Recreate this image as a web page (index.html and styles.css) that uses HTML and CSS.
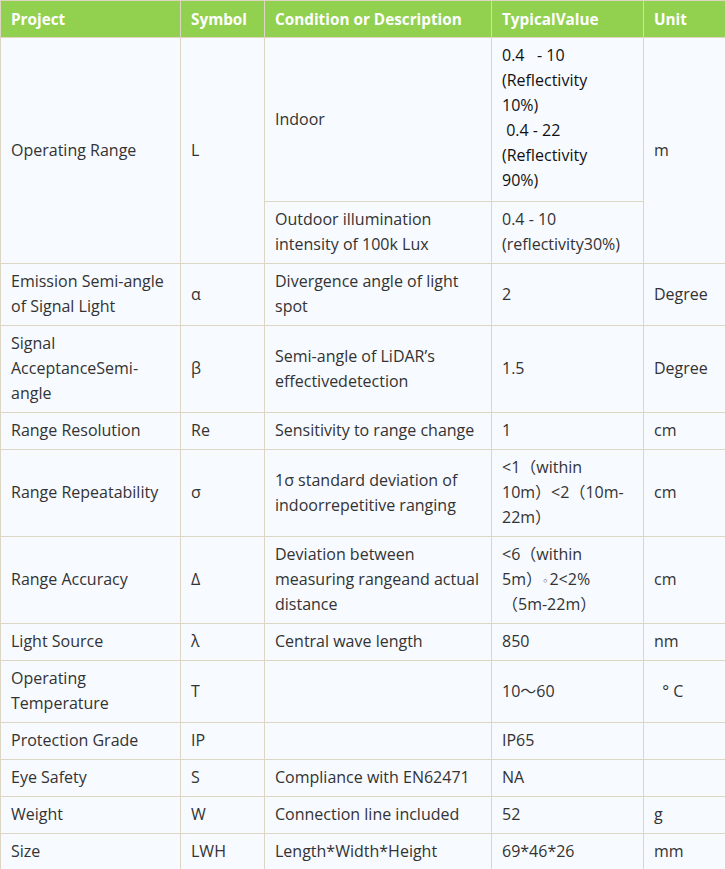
FILE: index.html
```html
<!DOCTYPE html>
<html>
<head>
<meta charset="utf-8">
<link rel="stylesheet" href="styles.css">
</head>
<body>
<table class="spec">
<colgroup>
<col class="c1"><col class="c2"><col class="c3"><col class="c4"><col class="c5">
</colgroup>
<thead>
<tr><th>Project</th><th>Symbol</th><th>Condition or Description</th><th>TypicalValue</th><th>Unit</th></tr>
</thead>
<tbody>
<tr>
<td rowspan="2">Operating Range</td>
<td rowspan="2">L</td>
<td>Indoor</td>
<td class="dark tall">0.4&nbsp;&nbsp; - 10<br>(Reflectivity<br>10%)<br>&nbsp;0.4 - 22<br>(Reflectivity<br>90%)</td>
<td rowspan="2">m</td>
</tr>
<tr>
<td>Outdoor illumination<br>intensity of 100k Lux</td>
<td>0.4 - 10<br>(reflectivity30%)</td>
</tr>
<tr><td>Emission Semi-angle<br>of Signal Light</td><td>α</td><td>Divergence angle of light<br>spot</td><td>2</td><td>Degree</td></tr>
<tr><td>Signal<br>AcceptanceSemi-<br>angle</td><td>β</td><td>Semi-angle of LiDAR’s<br>effectivedetection</td><td>1.5</td><td>Degree</td></tr>
<tr><td>Range Resolution</td><td>Re</td><td>Sensitivity to range change</td><td>1</td><td>cm</td></tr>
<tr><td>Range Repeatability</td><td>σ</td><td>1σ standard deviation of<br>indoorrepetitive ranging</td><td>&lt;1（within<br>10m）&lt;2（10m-<br>22m）</td><td>cm</td></tr>
<tr><td>Range Accuracy</td><td>Δ</td><td>Deviation between<br>measuring rangeand actual<br>distance</td><td>&lt;6（within<br>5m）<span class="dot">◦</span>2&lt;2%<br>（5m-22m）</td><td>cm</td></tr>
<tr><td>Light Source</td><td>λ</td><td>Central wave length</td><td>850</td><td>nm</td></tr>
<tr><td>Operating<br>Temperature</td><td>T</td><td></td><td>10～60</td><td>&nbsp;&nbsp;°&nbsp;C</td></tr>
<tr><td>Protection Grade</td><td>IP</td><td></td><td>IP65</td><td></td></tr>
<tr><td>Eye Safety</td><td>S</td><td>Compliance with EN62471</td><td>NA</td><td></td></tr>
<tr><td>Weight</td><td>W</td><td>Connection line included</td><td>52</td><td>g</td></tr>
<tr><td>Size</td><td>LWH</td><td>Length*Width*Height</td><td>69*46*26</td><td>mm</td></tr>
</tbody>
</table>
</body>
</html>
```
FILE: styles.css
```css
html, body {
  margin: 0;
  padding: 0;
  background: #ffffff;
}
.spec {
  width: 725px;
  border-collapse: collapse;
  table-layout: fixed;
  font-family: "Open Sans", "Noto Sans CJK SC", sans-serif;
  font-size: 16px;
  line-height: 25px;
  color: #333333;
}
.c1 { width: 180px; }
.c2 { width: 84px; }
.c3 { width: 227px; }
.c4 { width: 152px; }
.c5 { width: 82px; }
.spec th,
.spec td {
  border: 1px solid #ddd6c3;
  padding: 5px 10px 6px;
  text-align: left;
  vertical-align: middle;
  overflow: hidden;
  white-space: nowrap;
}
.spec th {
  background: #92d050;
  color: #ffffff;
  font-weight: 700;
  font-size: 15.3px;
  padding: 6px 10px 5px;
}
.spec td {
  background: #f7faff;
}
.spec td.dark {
  color: #111111;
}
.spec td.tall {
  padding-bottom: 8px;
}
.dot {
  font-family: "DejaVu Sans", sans-serif;
  font-size: 11px;
  line-height: 1;
  margin: 0 1px 0 0;
}
```
